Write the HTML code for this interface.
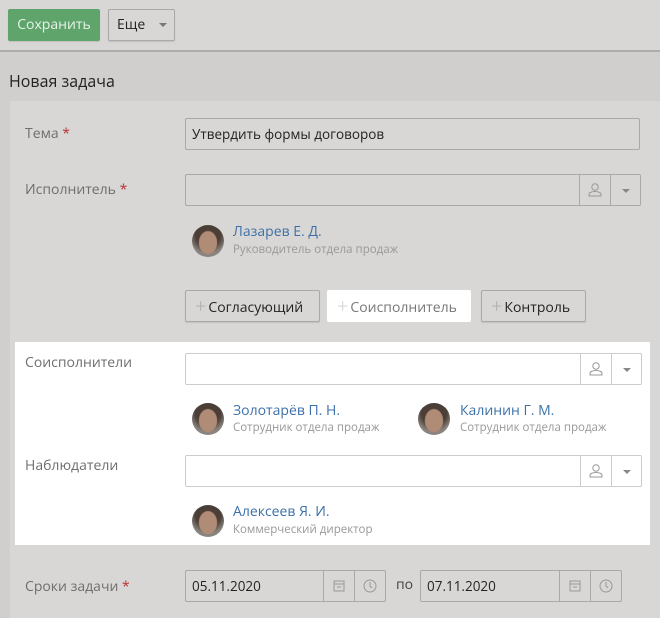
<!DOCTYPE html>
<html><head><meta charset="utf-8"><style>
*{box-sizing:border-box;margin:0;padding:0}
body{width:660px;height:618px;overflow:hidden;background:#d0cfcd;font-family:"Open Sans","Liberation Sans","DejaVu Sans",sans-serif;position:relative;font-size:14px;color:#333}
.a{position:absolute}
.top{left:0;top:0;width:660px;height:52px;background:#d8d7d5;border-bottom:2px solid #aeadab}
.btn{position:absolute;height:32px;border:1px solid #aaa9a7;background:#d8d7d5;border-radius:2px;line-height:30px;font-size:14px;color:#222;box-shadow:0 1px 1px rgba(0,0,0,.1)}
.btn .p{color:#aaa;font-size:20px;font-weight:300;vertical-align:-1px;margin-right:2px}
.panel{left:10px;top:101px;width:650px;height:517px;background:#d8d7d5}
.lbl{position:absolute;left:25px;color:#6f6e6c;font-size:14px}
.lbl b{color:#b33;font-weight:normal}
.inp{position:absolute;height:32px;border:1px solid #aaa9a7;background:#d8d7d5;border-radius:2px;font-size:13.5px;line-height:30px;padding-left:6px;color:#222}
.seg{position:absolute;top:0;height:30px;width:31px;border-left:1px solid #aaa9a7}
.white .inp{background:#fff;border-color:#ccc}
.white .seg{border-color:#ccc}
.av{position:absolute;width:32px;height:32px;border-radius:50%;background:radial-gradient(ellipse 30% 38% at 50% 55%,#b08b76 0 90%,transparent 100%),radial-gradient(circle at 50% 30%,#4a3e36 0 45%,#8a8480 70%)}
.nm{position:absolute;color:#3b70a8;font-size:14px}
.sb{position:absolute;color:#9a9998;font-size:11.5px}
</style></head><body>
<div class="a top"></div>
<div class="btn" style="left:8px;top:9px;width:92px;background:#5fa56b;border-color:#5fa56b;color:#e8f2e8;text-align:center">Сохранить</div>
<div class="btn" style="left:108px;top:9px;width:67px;padding-left:8px">Еще <span style="display:inline-block;margin-left:10px;border:4px solid transparent;border-top:4px solid #777;vertical-align:middle;margin-top:4px"></span></div>
<div class="a" style="left:9px;top:70px;font-size:16px;color:#222">Новая задача</div>
<div class="a panel"></div>

<div class="lbl" style="top:124px">Тема <b>*</b></div>
<div class="inp" style="left:185px;top:118px;width:455px">Утвердить формы договоров</div>

<div class="lbl" style="top:180px">Исполнитель <b>*</b></div>
<div class="inp" style="left:185px;top:174px;width:456px">
<div class="seg" style="right:30px"><svg width="31" height="30"><circle cx="15" cy="12" r="3.2" fill="none" stroke="#999"/><path d="M9 21v-1.5c0-2 3-3 6-3s6 1 6 3V21z" fill="none" stroke="#999"/></svg></div>
<div class="seg" style="right:0;width:30px"><svg width="30" height="30"><path d="M11 14h8l-4 4z" fill="#888"/></svg></div></div>
<div class="av" style="left:192px;top:225px"></div>
<div class="nm" style="left:233px;top:222px">Лазарев Е. Д.</div>
<div class="sb" style="left:233px;top:242px">Руководитель отдела продаж</div>

<div class="btn" style="left:185px;top:290px;width:135px;padding-left:9px"><span class="p">+</span>Согласующий</div>
<div class="btn" style="left:327px;top:290px;width:144px;padding-left:9px;background:#fff;border-color:#fff;color:#777;box-shadow:none"><span class="p" style="color:#ccc">+</span>Соисполнитель</div>
<div class="btn" style="left:481px;top:290px;width:105px;padding-left:9px"><span class="p">+</span>Контроль</div>

<div class="a white" style="left:15px;top:342px;width:635px;height:203px;background:#fff">
<div class="lbl" style="left:10px;top:11px">Соисполнители</div>
<div class="inp" style="left:170px;top:11px;width:457px">
<div class="seg" style="right:30px"><svg width="31" height="30"><circle cx="15" cy="12" r="3.2" fill="none" stroke="#999"/><path d="M9 21v-1.5c0-2 3-3 6-3s6 1 6 3V21z" fill="none" stroke="#999"/></svg></div>
<div class="seg" style="right:0;width:30px"><svg width="30" height="30"><path d="M11 14h8l-4 4z" fill="#888"/></svg></div></div>
<div class="av" style="left:177px;top:61px"></div>
<div class="nm" style="left:218px;top:59px">Золотарёв П. Н.</div>
<div class="sb" style="left:218px;top:78px">Сотрудник отдела продаж</div>
<div class="av" style="left:403px;top:61px"></div>
<div class="nm" style="left:445px;top:59px">Калинин Г. М.</div>
<div class="sb" style="left:445px;top:78px">Сотрудник отдела продаж</div>
<div class="lbl" style="left:10px;top:114px">Наблюдатели</div>
<div class="inp" style="left:170px;top:113px;width:457px">
<div class="seg" style="right:30px"><svg width="31" height="30"><circle cx="15" cy="12" r="3.2" fill="none" stroke="#999"/><path d="M9 21v-1.5c0-2 3-3 6-3s6 1 6 3V21z" fill="none" stroke="#999"/></svg></div>
<div class="seg" style="right:0;width:30px"><svg width="30" height="30"><path d="M11 14h8l-4 4z" fill="#888"/></svg></div></div>
<div class="av" style="left:177px;top:163px"></div>
<div class="nm" style="left:218px;top:160px">Алексеев Я. И.</div>
<div class="sb" style="left:218px;top:180px">Коммерческий директор</div>
</div>

<div class="lbl" style="top:577px">Сроки задачи <b>*</b></div>
<div class="inp" style="left:185px;top:570px;width:201px">05.11.2020
<div class="seg" style="right:31px"><svg width="31" height="30"><rect x="10" y="10" width="10" height="10" fill="none" stroke="#999"/><path d="M10 13h10M13 16h4" stroke="#999"/></svg></div>
<div class="seg" style="right:0"><svg width="31" height="30"><circle cx="15" cy="15" r="6" fill="none" stroke="#999"/><path d="M15 11v4l2 2" fill="none" stroke="#999"/></svg></div></div>
<div class="a" style="left:396px;top:575px;color:#444">по</div>
<div class="inp" style="left:420px;top:570px;width:202px">07.11.2020
<div class="seg" style="right:31px"><svg width="31" height="30"><rect x="10" y="10" width="10" height="10" fill="none" stroke="#999"/><path d="M10 13h10M13 16h4" stroke="#999"/></svg></div>
<div class="seg" style="right:0"><svg width="31" height="30"><circle cx="15" cy="15" r="6" fill="none" stroke="#999"/><path d="M15 11v4l2 2" fill="none" stroke="#999"/></svg></div></div>
</body></html>
